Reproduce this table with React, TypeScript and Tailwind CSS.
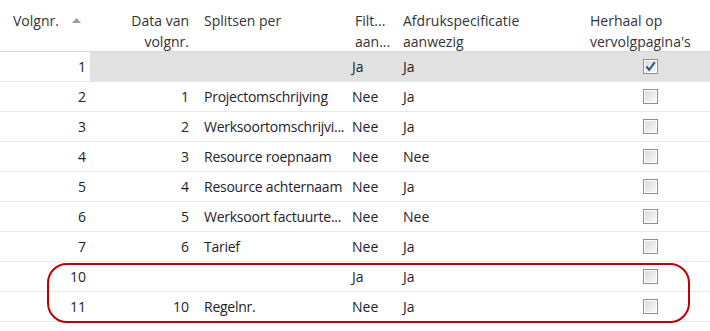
const rows = [
  { nr: "1", data: "", split: "", filt: "Ja", afdruk: "Ja", checked: true },
  { nr: "2", data: "1", split: "Projectomschrijving", filt: "Nee", afdruk: "Ja", checked: false },
  { nr: "3", data: "2", split: "Werksoortomschrijvi...", filt: "Nee", afdruk: "Ja", checked: false },
  { nr: "4", data: "3", split: "Resource roepnaam", filt: "Nee", afdruk: "Nee", checked: false },
  { nr: "5", data: "4", split: "Resource achternaam", filt: "Nee", afdruk: "Ja", checked: false },
  { nr: "6", data: "5", split: "Werksoort factuurte...", filt: "Nee", afdruk: "Nee", checked: false },
  { nr: "7", data: "6", split: "Tarief", filt: "Nee", afdruk: "Ja", checked: false },
  { nr: "10", data: "", split: "", filt: "Ja", afdruk: "Ja", checked: false },
  { nr: "11", data: "10", split: "Regelnr.", filt: "Nee", afdruk: "Ja", checked: false },
];

function Checkbox({ checked }: { checked: boolean }) {
  return (
    <div className="w-[15px] h-[15px] border border-[#8e8e8e] bg-white p-px">
      <div className="w-full h-full bg-gradient-to-br from-[#dcdcdc] to-[#f8f8f8] flex items-center justify-center">
        {checked && (
          <svg width="11" height="11" viewBox="0 0 11 11">
            <path d="M1.5 5.5 L4.2 8.8 L9.8 1.2" fill="none" stroke="#3a4f9c" strokeWidth="2" />
          </svg>
        )}
      </div>
    </div>
  );
}

export default function App() {
  return (
    <div
      className="relative w-[710px] h-[331px] bg-white text-[#1f2228] text-[14px] overflow-hidden"
      style={{ fontFamily: '"Open Sans", "Noto Sans", sans-serif' }}
    >
      <div className="grid grid-cols-[90px_103px_155px_51px_187px_124px] h-[52px] border-b border-[#dadada] leading-[21px] pt-[10px] text-[#333]">
        <div className="flex items-start pl-[13px]">
          <span>Volgnr.</span>
          <svg className="ml-[13px] mt-[8px]" width="9" height="5" viewBox="0 0 9 5">
            <path d="M4.5 0 L9 5 L0 5 Z" fill="#9a9a9a" />
          </svg>
        </div>
        <div className="text-right pr-[4px]">
          Data van
          <br />
          volgnr.
        </div>
        <div className="pl-[11px]">Splitsen per</div>
        <div className="pl-[7px]">
          Filt...
          <br />
          aan...
        </div>
        <div className="pl-[4px]">
          Afdrukspecificatie
          <br />
          aanwezig
        </div>
        <div className="pl-[4px]">
          Herhaal op
          <br />
          vervolgpagina's
        </div>
      </div>

      {rows.map((r, i) => (
        <div key={r.nr} className="flex h-[30px] border-b border-[#e8e8e8]">
          <div className="w-[90px] shrink-0 flex items-center justify-end pr-[4px]">{r.nr}</div>
          <div
            className={`grid grid-cols-[103px_155px_51px_187px_124px] flex-1 items-center ${
              i === 0 ? "bg-[#e1e1e1]" : ""
            }`}
          >
            <div className="text-right pr-[4px]">{r.data}</div>
            <div className="pl-[11px] whitespace-nowrap tracking-[-0.25px]">{r.split}</div>
            <div className="pl-[4px]">{r.filt}</div>
            <div className="pl-[4px]">{r.afdruk}</div>
            <div className="pl-[57px]">
              <Checkbox checked={r.checked} />
            </div>
          </div>
        </div>
      ))}

      <div className="absolute left-[47px] top-[263px] w-[643px] h-[60px] border-2 border-[#c00000] rounded-[20px] pointer-events-none" />
    </div>
  );
}
